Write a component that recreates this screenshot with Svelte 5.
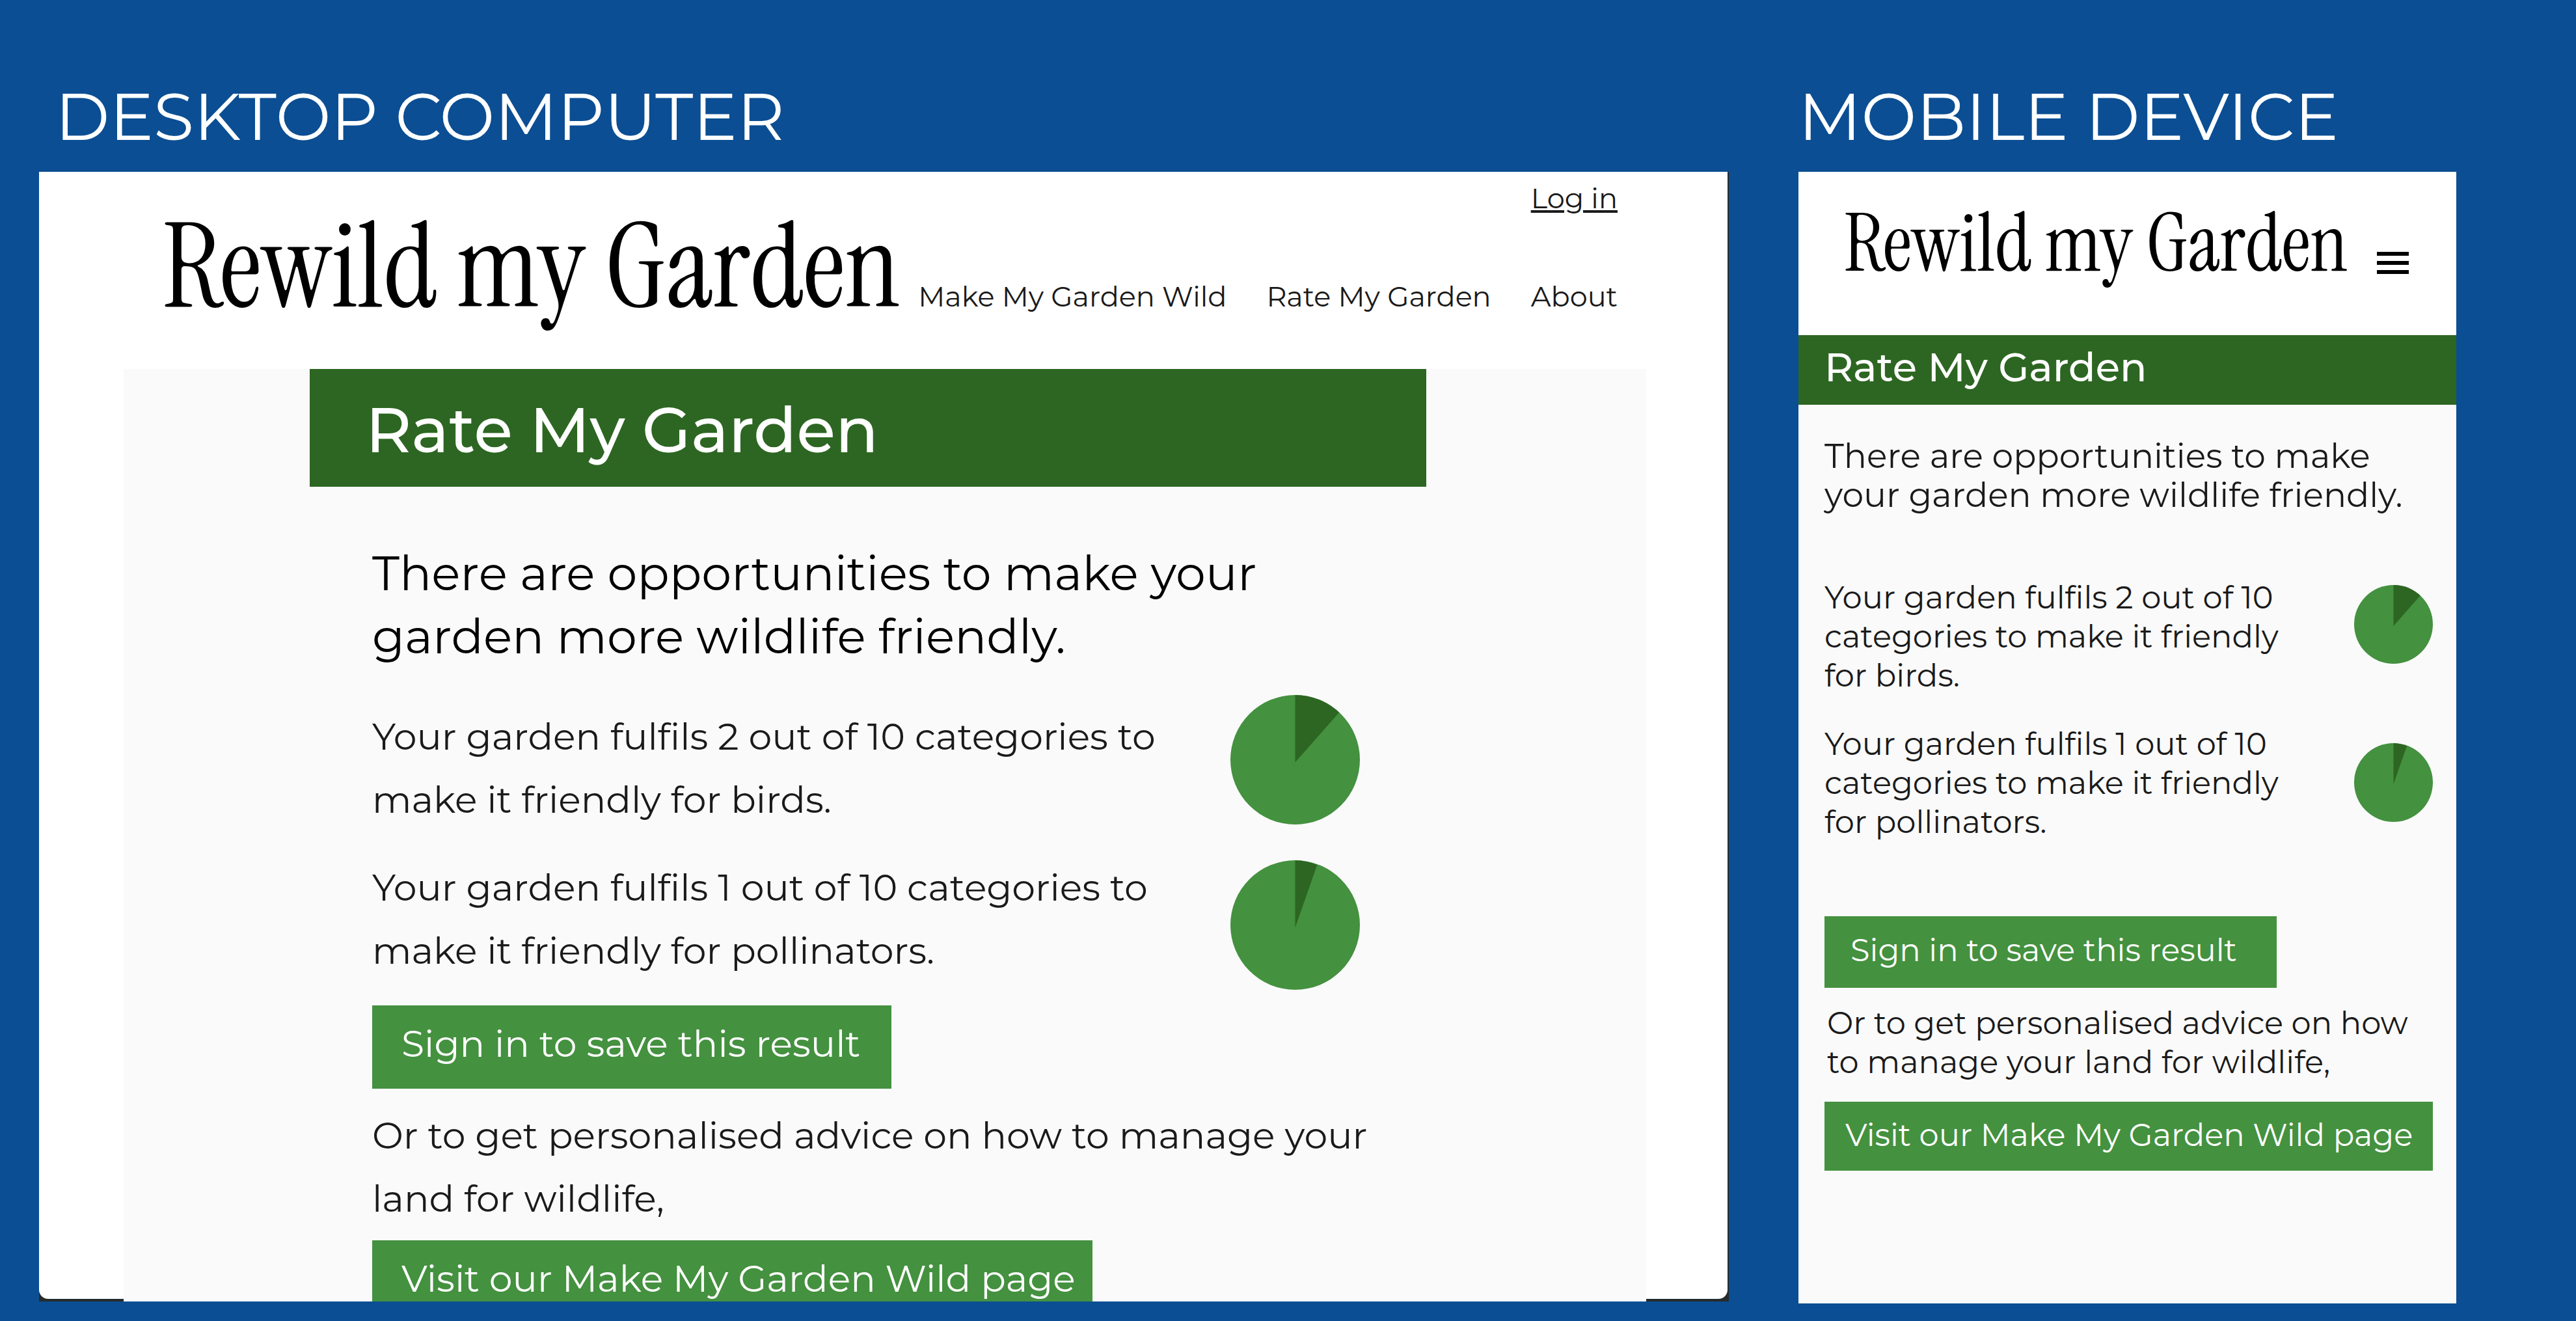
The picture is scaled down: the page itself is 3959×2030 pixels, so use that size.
<script>
  const results = [
    { name: 'birds', count: 2, path: 'M50 52V0A50 50 0 0 1 84 13.5Z' },
    { name: 'pollinators', count: 1, path: 'M50 52V0A50 50 0 0 1 67 3.5Z' }
  ];
</script>

{#snippet pie(result)}
  <svg class="pie" viewBox="0 0 100 100" role="img" aria-label="{result.count} out of 10 for {result.name}">
    <circle cx="50" cy="50" r="50" fill="#44913f" />
    <path d={result.path} fill="#2d6622" />
  </svg>
{/snippet}

{#snippet rating()}
  <p class="intro">There are opportunities to make your garden more wildlife friendly.</p>
  <div class="results">
    <div class="result-texts">
      {#each results as result}
        <p>Your garden fulfils {result.count} out of 10 categories to make it friendly for {result.name}.</p>
      {/each}
    </div>
    <div class="pies">
      {#each results as result}
        {@render pie(result)}
      {/each}
    </div>
  </div>
  <button class="sign-in" type="button">Sign in to save this result</button>
  <p class="advice">Or to get personalised advice on how to manage your land for wildlife,</p>
  <button class="visit" type="button">Visit our Make My Garden Wild page</button>
{/snippet}

<main class="board">
  <section class="desktop">
    <h1>DESKTOP COMPUTER</h1>
    <div class="frame">
      <div class="window">
        <header>
          <a class="login" href="#login">Log in</a>
          <div class="bar">
            <a class="logo" href="#home">Rewild my Garden</a>
            <nav>
              <a href="#wild">Make My Garden Wild</a>
              <a href="#rate">Rate My Garden</a>
              <a href="#about">About</a>
            </nav>
          </div>
        </header>
        <div class="panel">
          <h2>Rate My Garden</h2>
          <div class="content">
            {@render rating()}
          </div>
        </div>
      </div>
    </div>
  </section>

  <section class="mobile">
    <h1>MOBILE DEVICE</h1>
    <div class="frame">
      <header>
        <a class="logo" href="#home">Rewild my Garden</a>
        <button class="menu" type="button" aria-label="Menu">
          <span></span><span></span><span></span>
        </button>
      </header>
      <h2>Rate My Garden</h2>
      <div class="content">
        {@render rating()}
      </div>
    </div>
  </section>
</main>

<style>
  :global(body) {
    background: #0b4e93;
  }

  .board {
    display: grid;
    grid-template-columns: 2597fr 1011fr;
    column-gap: 107px;
    align-items: start;
    padding: 117px 184px 27px 60px;
    font-family: Montserrat, "Open Sans", sans-serif;
    color: #1a1a1a;
  }

  h1, h2, p {
    margin: 0;
  }

  h1 {
    margin-bottom: 23px;
    padding-left: 25px;
    font-size: 101px;
    line-height: 124px;
    font-weight: 400;
    color: #fff;
    white-space: nowrap;
  }

  .mobile h1 {
    padding-left: 0;
  }

  h2 {
    background: #2d6622;
    color: #fff;
    font-weight: 500;
  }

  a {
    color: inherit;
    text-decoration: none;
    white-space: nowrap;
  }

  button {
    display: block;
    border: 0;
    font-family: inherit;
    font-weight: 400;
    text-align: left;
    color: #fff;
    background: #44913f;
    white-space: nowrap;
  }

  .logo {
    font-family: "Instrument Serif", "Playfair Display", "Liberation Serif", serif;
    color: #000;
  }

  .results {
    display: flex;
    justify-content: space-between;
    align-items: flex-start;
  }

  .result-texts,
  .pies {
    display: flex;
    flex-direction: column;
  }

  .pies {
    flex: none;
  }

  .pie {
    display: block;
    width: 100%;
  }

  /* Desktop preview */
  .desktop .frame {
    aspect-ratio: 2597 / 1736;
    overflow: hidden;
    background: #262b2b;
  }

  .desktop .window {
    height: calc(100% - 4px);
    margin-right: 2px;
    border-radius: 0 0 14px 14px;
    background: #fff;
  }

  .desktop header {
    display: flex;
    flex-direction: column;
    padding: 15px 169px 85px 190px;
  }

  .login {
    align-self: flex-end;
    margin-bottom: 19px;
    font-size: 43px;
    line-height: 52px;
    text-decoration: underline;
  }

  .bar {
    display: flex;
    justify-content: space-between;
    align-items: baseline;
  }

  .desktop .logo {
    font-size: 180px;
    line-height: 120px;
  }

  nav {
    display: flex;
    gap: 61px;
    font-size: 43px;
    line-height: 52px;
  }

  .panel {
    margin: 0 125px 0 130px;
    background: #fafafa;
  }

  .desktop h2 {
    margin: 0 338px 0 286px;
    padding: 34px 86px 29px;
    font-size: 97px;
    line-height: 118px;
  }

  .desktop .content {
    padding: 84px 400px 0 382px;
    font-size: 57px;
    line-height: 97px;
  }

  .desktop .intro {
    font-size: 73px;
    color: #000;
  }

  .desktop .results {
    padding: 42px 40px 24px 0;
  }

  .desktop .result-texts {
    gap: 38px;
    padding-top: 15px;
  }

  .desktop .pies {
    width: 199px;
    gap: 55px;
    margin-left: 80px;
  }

  .desktop button {
    padding: 24px 48px 35px 45px;
    font-size: 57px;
    line-height: 69px;
  }

  .desktop .advice {
    padding: 23px 0 16px;
  }

  .desktop .visit {
    padding-right: 26px;
  }

  /* Mobile preview */
  .mobile .frame {
    aspect-ratio: 1011 / 1739;
    overflow: hidden;
    background: #fafafa;
  }

  .mobile header {
    display: flex;
    justify-content: space-between;
    align-items: flex-end;
    padding: 63px 73px 94px 70px;
    background: #fff;
  }

  .mobile .logo {
    font-size: 123px;
    line-height: 94px;
  }

  .mobile .menu {
    display: flex;
    flex-direction: column;
    gap: 8px;
    width: 49px;
    padding: 0;
    background: none;
  }

  .menu span {
    height: 6px;
    background: #000;
  }

  .mobile h2 {
    padding: 12px 40px 20px;
    font-size: 61px;
    line-height: 75px;
  }

  .mobile .content {
    padding: 49px 36px 0 40px;
    font-size: 48px;
    line-height: 60px;
  }

  .mobile .intro {
    font-size: 52px;
  }

  .mobile .results {
    padding: 97px 0 115px;
  }

  .mobile .result-texts {
    gap: 45px;
  }

  .mobile .pies {
    width: 121px;
    gap: 122px;
    margin-left: 95px;
    padding-top: 11px;
  }

  .mobile .sign-in,
  .mobile .visit {
    font-size: 48px;
    line-height: 58px;
  }

  .mobile .sign-in {
    padding: 23px 61px 29px 40px;
  }

  .mobile .advice {
    padding: 24px 0 31px 4px;
  }

  .mobile .visit {
    width: 100%;
    padding: 22px 0 26px 32px;
  }
</style>
